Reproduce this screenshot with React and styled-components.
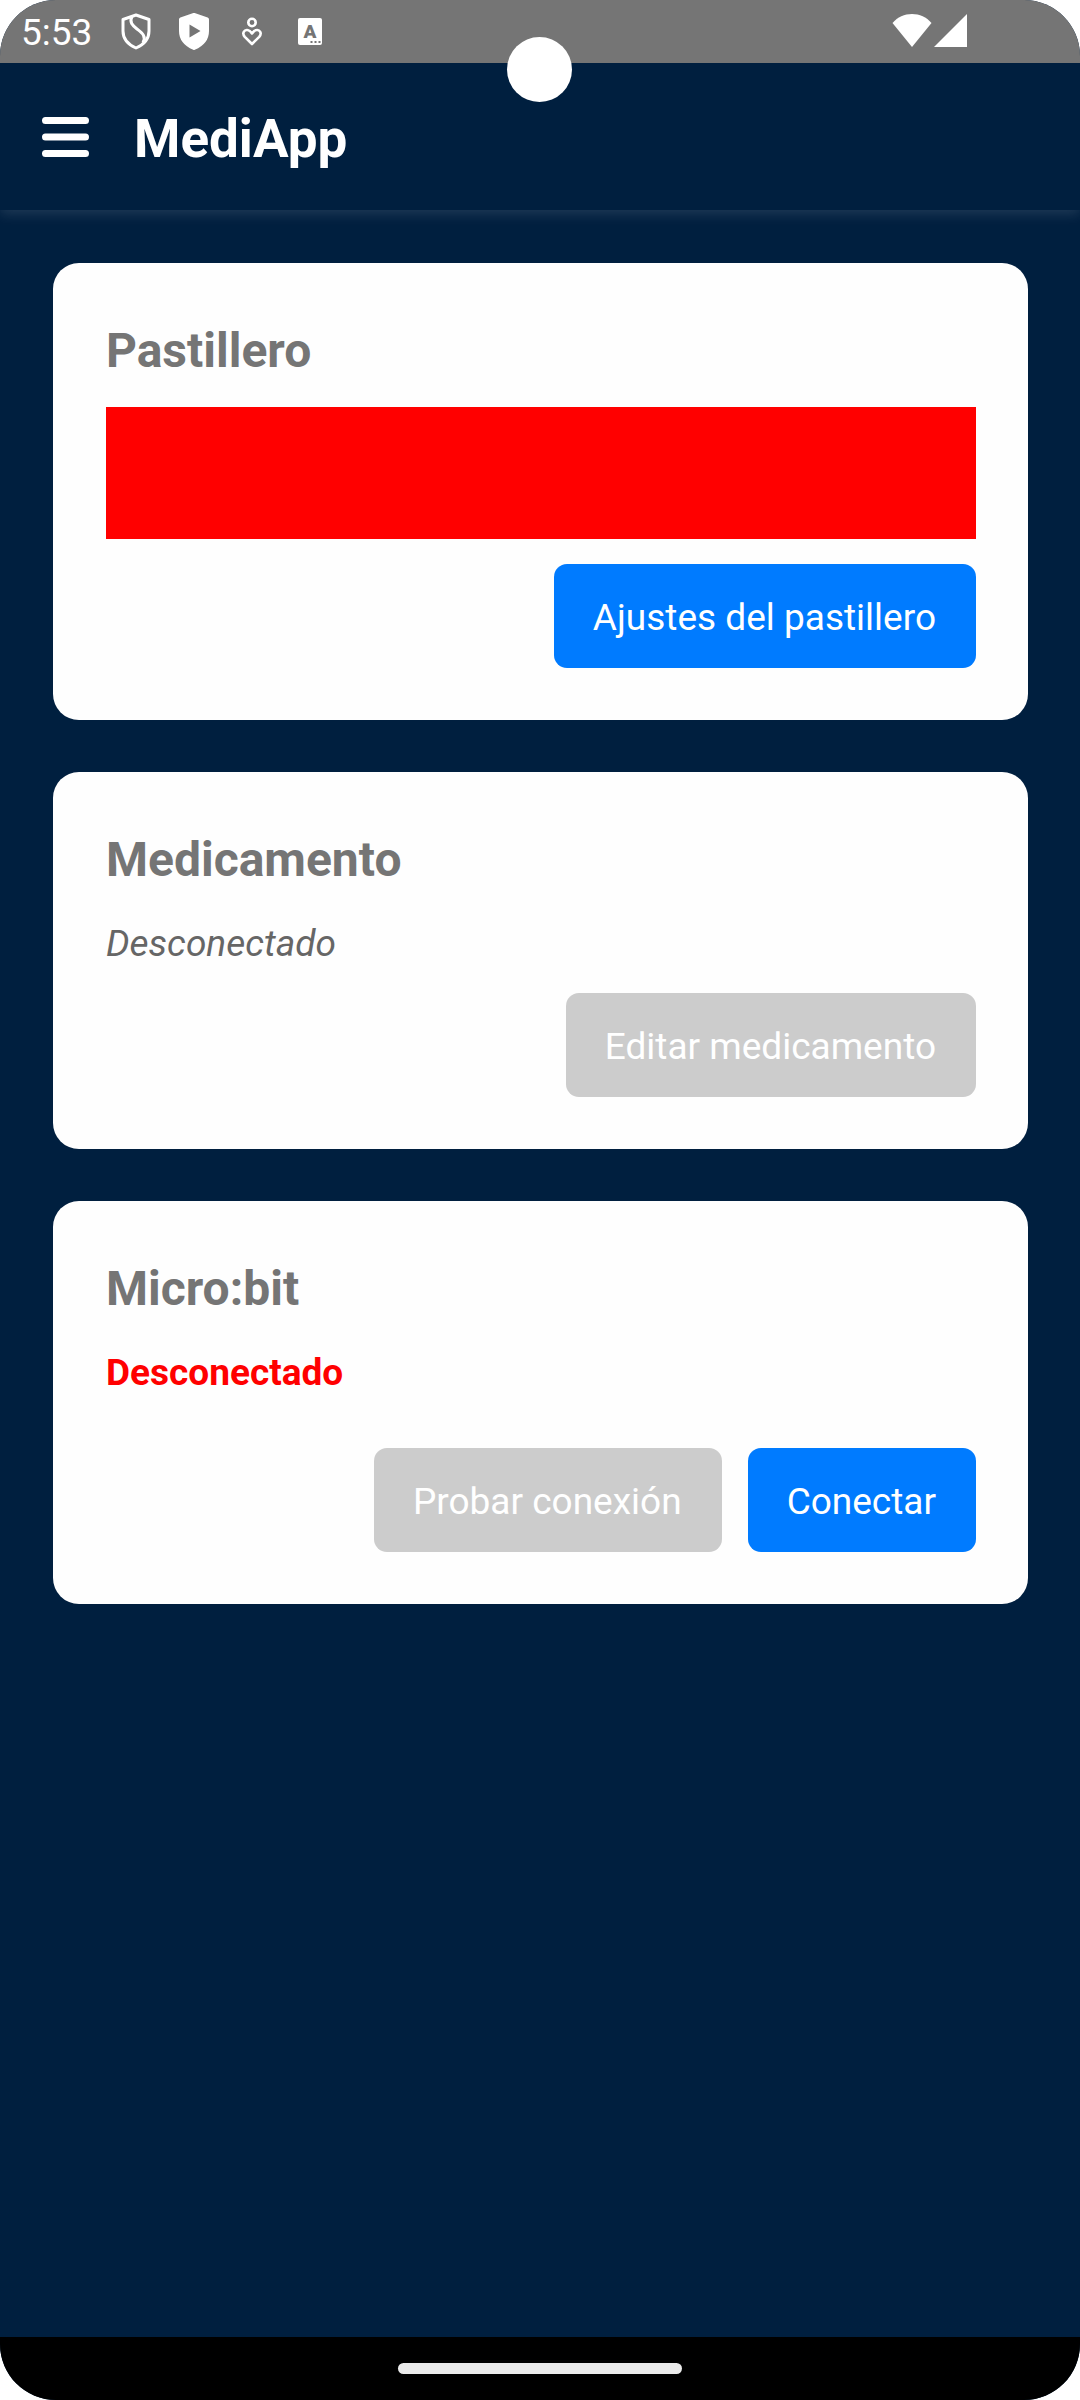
import React from "react";
import styled, { createGlobalStyle } from "styled-components";

const GlobalStyle = createGlobalStyle`
  * { box-sizing: border-box; }
  body {
    margin: 0;
    background: #ffffff;
    font-family: Roboto, "Noto Sans", sans-serif;
  }
`;

const Screen = styled.div`
  position: relative;
  display: flex;
  flex-direction: column;
  min-height: 100vh;
  overflow: hidden;
  border-radius: 56px;
  background: #001f3f;
`;

const StatusBar = styled.div`
  z-index: 1;
  display: flex;
  align-items: center;
  justify-content: space-between;
  height: 63px;
  padding: 3px 112px 0 21px;
  background: #757575;
  color: #ffffff;
`;

const StatusGroup = styled.div`
  display: flex;
  align-items: center;
  gap: ${(p) => p.$gap}px;
`;

const Clock = styled.span`
  width: 75px;
  font-size: 37px;
  line-height: 40px;
`;

const StatusIcon = styled.svg`
  display: block;
  height: 40px;
`;

const CameraHole = styled.div`
  position: absolute;
  z-index: 2;
  top: 37px;
  left: 50%;
  width: 65px;
  height: 65px;
  margin-left: -33px;
  border-radius: 50%;
  background: #ffffff;
`;

const Header = styled.header`
  display: flex;
  align-items: center;
  gap: 42px;
  height: 147px;
  padding: 4px 40px 0;
  background: #001f3f;
  box-shadow: 0 4px 12px rgba(255, 255, 255, 0.12);
`;

const MenuButton = styled.button`
  display: block;
  padding: 0;
  border: 0;
  background: none;
  color: #ffffff;

  svg {
    display: block;
  }
`;

const AppTitle = styled.h1`
  margin: 0;
  font-size: 53px;
  line-height: 64px;
  font-weight: 700;
  color: #ffffff;
`;

const Content = styled.main`
  flex: 1;
  display: flex;
  flex-direction: column;
  gap: 52px;
  padding: 53px 52px 53px 53px;
`;

const Card = styled.section`
  padding: 53px 52px 52px 53px;
  border-radius: 26px;
  background: #fefefe;
`;

const CardTitle = styled.h2`
  margin: 0 0 21px;
  font-size: 48px;
  line-height: 70px;
  font-weight: 700;
  color: #757575;
`;

const Alert = styled.div`
  height: 132px;
  background: #ff0000;
`;

const Status = styled.p`
  margin: 0;
  font-size: 37px;
  line-height: 56px;
  font-style: ${(p) => (p.$alert ? "normal" : "italic")};
  font-weight: ${(p) => (p.$alert ? 700 : 400)};
  color: ${(p) => (p.$alert ? "#ff0000" : "#666666")};
`;

const Actions = styled.div`
  display: flex;
  justify-content: flex-end;
  gap: 26px;
  margin-top: ${(p) => p.$space}px;
`;

const Button = styled.button`
  height: 104px;
  padding: 4px 40px 0 39px;
  border: 0;
  border-radius: 13px;
  background: #007bff;
  color: #ffffff;
  font-family: inherit;
  font-size: 37px;
  line-height: 56px;

  &:disabled {
    background: #cccccc;
  }
`;

const NavBar = styled.div`
  display: flex;
  align-items: center;
  justify-content: center;
  height: 63px;
  background: #000000;
`;

const HomeIndicator = styled.div`
  width: 284px;
  height: 11px;
  border-radius: 6px;
  background: #ebebeb;
`;

const SHIELD = "M18 2 L31 6.5 V18 C31 25.500 26 31.500 18 35 C10 31.500 5 25.500 5 18 V6.500 Z";

function StatusIcons() {
  return (
    <StatusGroup $gap={22}>
      <Clock>5:53</Clock>
      <StatusIcon width="36" viewBox="0 0 36 40" fill="none" stroke="#fff" strokeWidth="3" strokeLinejoin="round">
        <path d={SHIELD} />
        <path d="M14 3.500 C11 9 14.500 12.500 19 16 C24 20 28.500 23 25 29.500" />
      </StatusIcon>
      <StatusIcon width="36" viewBox="0 0 36 40">
        <path d={SHIELD} fill="#fff" stroke="#fff" strokeWidth="4" strokeLinejoin="round" />
        <path d="M13.500 11.500 L24.500 18 L13.500 24.500 Z" fill="#757575" />
      </StatusIcon>
      <StatusIcon width="36" viewBox="0 0 36 40" fill="none" stroke="#fff" strokeWidth="2.600" strokeLinejoin="round">
        <circle cx="18" cy="9.500" r="3.700" />
        <path d="M18 31 L10.800 23.800 C7.500 20 10.500 16.500 13.500 17 C15.800 17.300 17 19 18 20.500 C19 19 20.200 17.300 22.500 17 C25.500 16.500 28.500 20 25.200 23.800 Z" />
      </StatusIcon>
      <StatusIcon width="36" viewBox="0 0 36 40">
        <rect x="6" y="5" width="24" height="27" rx="2" fill="#fff" />
        <text x="18" y="25" textAnchor="middle" fontSize="19" fontWeight="900" fill="#757575">A</text>
        <path d="M18.500 28 h2 v2 h-2 z M22.500 28 h2 v2 h-2 z M26.500 28 h2 v2 h-2 z" fill="#757575" />
      </StatusIcon>
    </StatusGroup>
  );
}

function SignalIcons() {
  return (
    <StatusGroup $gap={2}>
      <StatusIcon width="40" viewBox="0 0 40 40" fill="#fff">
        <path d="M20 34 L0.500 10 C5.500 4 12.500 1 20 1 C27.500 1 34.500 4 39.500 10 Z" />
      </StatusIcon>
      <StatusIcon width="34" viewBox="0 0 34 40" fill="#fff">
        <path d="M33 1 V34 H0 Z" />
      </StatusIcon>
    </StatusGroup>
  );
}

export default function App() {
  return (
    <>
      <GlobalStyle />
      <Screen>
        <StatusBar>
          <StatusIcons />
          <SignalIcons />
        </StatusBar>
        <CameraHole />
        <Header>
          <MenuButton type="button" aria-label="Menú">
            <svg width="52" height="48" viewBox="0 0 52 48" stroke="currentColor" strokeWidth="7" strokeLinecap="round">
              <path d="M5.500 5.500 H45.500 M5.500 22 H45.500 M5.500 38.500 H45.500" />
            </svg>
          </MenuButton>
          <AppTitle>MediApp</AppTitle>
        </Header>
        <Content>
          <Card>
            <CardTitle>Pastillero</CardTitle>
            <Alert />
            <Actions $space={25}>
              <Button type="button">Ajustes del pastillero</Button>
            </Actions>
          </Card>
          <Card>
            <CardTitle>Medicamento</CardTitle>
            <Status>Desconectado</Status>
            <Actions $space={21}>
              <Button type="button" disabled>Editar medicamento</Button>
            </Actions>
          </Card>
          <Card>
            <CardTitle>Micro:bit</CardTitle>
            <Status $alert>Desconectado</Status>
            <Actions $space={47}>
              <Button type="button" disabled>Probar conexión</Button>
              <Button type="button">Conectar</Button>
            </Actions>
          </Card>
        </Content>
        <NavBar>
          <HomeIndicator />
        </NavBar>
      </Screen>
    </>
  );
}
